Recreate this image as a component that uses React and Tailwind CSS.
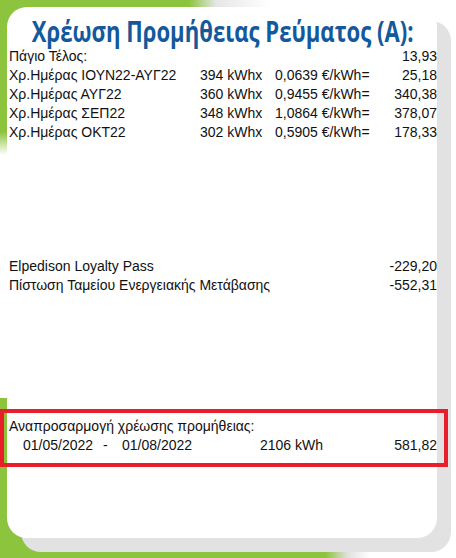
const rows = [
  { label: 'Χρ.Ημέρας ΙΟΥΝ22-ΑΥΓ22', kwh: '394 kWhx', price: '0,0639 €/kWh=', value: '25,18' },
  { label: 'Χρ.Ημέρας ΑΥΓ22', kwh: '360 kWhx', price: '0,9455 €/kWh=', value: '340,38' },
  { label: 'Χρ.Ημέρας ΣΕΠ22', kwh: '348 kWhx', price: '1,0864 €/kWh=', value: '378,07' },
  { label: 'Χρ.Ημέρας ΟΚΤ22', kwh: '302 kWhx', price: '0,5905 €/kWh=', value: '178,33' },
]

const credits = [
  { label: 'Elpedison Loyalty Pass', value: '-229,20' },
  { label: 'Πίστωση Ταμείου Ενεργειακής Μετάβασης', value: '-552,31' },
]

function ChargeRow({ label, kwh, price, value }) {
  return (
    <div className="flex h-[19px] items-center">
      <span className="w-[191px]">{label}</span>
      <span className="w-[75px]">{kwh}</span>
      <span className="flex-1">{price}</span>
      <span className="text-right">{value}</span>
    </div>
  )
}

export default function App() {
  return (
    <div className="relative h-[558px] w-[456px] overflow-hidden bg-white">
      {/* green backdrop pieces */}
      <div className="absolute left-0 top-0 h-[155px] w-[205px] bg-[linear-gradient(to_bottom,#8cc43e_85%,transparent)]" />
      <div className="absolute left-0 top-0 h-[10px] w-[270px] bg-[linear-gradient(to_right,#8cc43e_70%,#e6e6e6_80%,transparent)]" />
      <div className="absolute left-0 top-[398px] h-[160px] w-[370px] bg-[linear-gradient(to_right,#8cc43e_88%,#e0e0e0_94%,transparent)]" />

      <div className="relative pl-[7px] pt-[7px]">
        <div className="h-[531px] w-[430px] rounded-[20px] bg-white pl-[2px] text-[14px] leading-[19px] text-[#111] shadow-[14px_14px_0_0_#e2e2e2] [font-family:'Liberation_Sans',Arial,sans-serif]">
          <div className="flex justify-center pt-[9px]">
            <h1 className="origin-center scale-x-[0.79] whitespace-nowrap text-[28px] font-bold leading-[30px] text-[#13599b] [font-family:'Open_Sans',sans-serif]">
              Χρέωση Προμήθειας Ρεύματος (Α):
            </h1>
          </div>

          <div className="mt-[1px]">
            <div className="flex h-[19px] items-center justify-between">
              <span>Πάγιο Τέλος:</span>
              <span>13,93</span>
            </div>
            {rows.map((r) => (
              <ChargeRow key={r.label} {...r} />
            ))}
          </div>

          <div className="mt-[115px]">
            {credits.map((c) => (
              <div key={c.label} className="flex h-[19px] items-center justify-between">
                <span>{c.label}</span>
                <span>{c.value}</span>
              </div>
            ))}
          </div>

          <div className="-ml-[9px] -mr-[11px] mt-[114px] border-[4px] border-[#e81f2a] pb-[8px] pl-[5px] pt-[4px]">
            <div className="h-[19px]">Αναπροσαρμογή χρέωσης προμήθειας:</div>
            <div className="flex h-[19px] items-center pr-[7px]">
              <span className="ml-[14px] w-[80px]">01/05/2022</span>
              <span className="w-[19px]">-</span>
              <span className="w-[138px]">01/08/2022</span>
              <span className="flex-1">2106 kWh</span>
              <span>581,82</span>
            </div>
          </div>
        </div>
      </div>
    </div>
  )
}
